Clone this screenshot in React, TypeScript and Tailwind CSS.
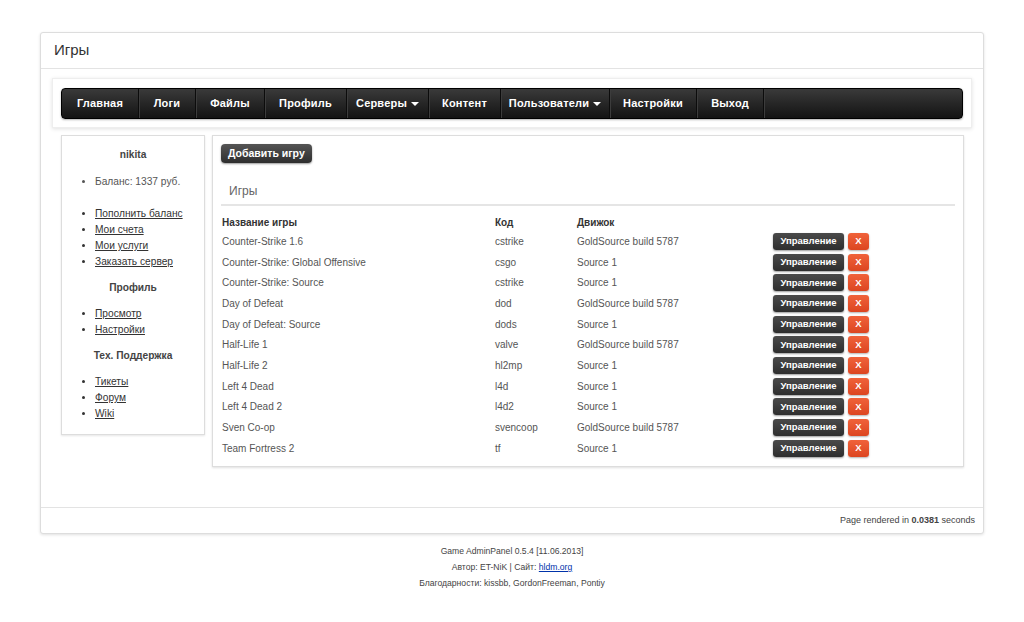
import React from "react";

const games = [
  ["Counter-Strike 1.6", "cstrike", "GoldSource build 5787"],
  ["Counter-Strike: Global Offensive", "csgo", "Source 1"],
  ["Counter-Strike: Source", "cstrike", "Source 1"],
  ["Day of Defeat", "dod", "GoldSource build 5787"],
  ["Day of Defeat: Source", "dods", "Source 1"],
  ["Half-Life 1", "valve", "GoldSource build 5787"],
  ["Half-Life 2", "hl2mp", "Source 1"],
  ["Left 4 Dead", "l4d", "Source 1"],
  ["Left 4 Dead 2", "l4d2", "Source 1"],
  ["Sven Co-op", "svencoop", "GoldSource build 5787"],
  ["Team Fortress 2", "tf", "Source 1"],
];

const nav: [string, number, boolean][] = [
  ["Главная", 77, false],
  ["Логи", 57, false],
  ["Файлы", 69, false],
  ["Профиль", 82, false],
  ["Серверы", 82, true],
  ["Контент", 72, false],
  ["Пользователи", 109, true],
  ["Настройки", 87, false],
  ["Выход", 67, false],
];

function Caret() {
  return <span className="ml-[4px] inline-block w-0 h-0 border-l-[4px] border-r-[4px] border-t-[4px] border-l-transparent border-r-transparent border-t-white align-middle" />;
}

export default function App() {
  return (
    <div className="w-[1024px] h-[622px] bg-white text-[#555] overflow-hidden" style={{ fontFamily: '"Liberation Sans", Arial, sans-serif' }}>
      <div className="pt-[32px] px-[40px]">
        <div className="w-[944px] h-[502px] border border-[#ddd] rounded-[3px] shadow-[0_1px_3px_rgba(0,0,0,0.12)] bg-white flex flex-col">
          <div className="h-[36px] border-b border-[#e3e3e3] pl-[13px] flex items-center">
            <span className="text-[15px] text-[#333]">Игры</span>
          </div>
          <div className="mt-[9px] mx-[11px] h-[50px] border border-[#eee] shadow-[0_1px_4px_rgba(0,0,0,0.12)] bg-white px-[8px] pt-[9px]">
            <div className="h-[31px] rounded-[4px] bg-gradient-to-b from-[#3a3a3a] to-[#141414] border border-[#000] flex shadow-[0_1px_2px_rgba(0,0,0,0.3)]">
              {nav.map(([label, w, caret]) => (
                <div key={label} style={{ width: w }} className="h-full flex items-center justify-center text-white text-[11px] font-bold tracking-[0.2px] border-r border-[#0c0c0c] shadow-[1px_0_0_#3c3c3c]">
                  {label}
                  {caret && <Caret />}
                </div>
              ))}
            </div>
          </div>
          <div className="flex mt-[7px] ml-[20px] gap-[7px] items-start">
            <div className="w-[144px] h-[300px] border border-[#ddd] shadow-[0_1px_2px_rgba(0,0,0,0.1)] bg-white text-[10.2px] pt-[11px]">
              <div className="text-center font-bold text-[#444] leading-[16px]">nikita</div>
              <ul className="list-disc pl-[33px] mt-[11px] leading-[16px] marker:text-[#555]">
                <li>Баланс: 1337 руб.</li>
              </ul>
              <ul className="list-disc pl-[33px] mt-[16px] leading-[16px] text-[#333]">
                <li><span className="underline">Пополнить баланс</span></li>
                <li><span className="underline">Мои счета</span></li>
                <li><span className="underline">Мои услуги</span></li>
                <li><span className="underline">Заказать сервер</span></li>
              </ul>
              <div className="text-center font-bold text-[#444] leading-[16px] mt-[10px]">Профиль</div>
              <ul className="list-disc pl-[33px] mt-[10px] leading-[16px] text-[#333]">
                <li><span className="underline">Просмотр</span></li>
                <li><span className="underline">Настройки</span></li>
              </ul>
              <div className="text-center font-bold text-[#444] leading-[16px] mt-[10px]">Тех. Поддержка</div>
              <ul className="list-disc pl-[33px] mt-[10px] leading-[16px] text-[#333]">
                <li><span className="underline">Тикеты</span></li>
                <li><span className="underline">Форум</span></li>
                <li><span className="underline">Wiki</span></li>
              </ul>
            </div>
            <div className="w-[752px] h-[332px] border border-[#ddd] shadow-[0_1px_2px_rgba(0,0,0,0.12)] bg-white pt-[8px] pl-[8px] pr-[8px]">
              <div className="flex w-fit h-[19px] px-[7px] items-center rounded-[4px] bg-gradient-to-b from-[#555] to-[#2e2e2e] text-white text-[10.5px] font-bold shadow-[0_1px_2px_rgba(0,0,0,0.4)]">
                Добавить игру
              </div>
              <div className="mt-[20px] pl-[8px] pb-[5px] leading-[16px] border-b-2 border-[#e5e5e5] text-[12px] text-[#666]">Игры</div>
              <div className="mt-[7px] text-[10px]">
                <div className="flex h-[18px] items-center font-bold text-[#333]">
                  <div className="w-[274px] pl-[1px]">Название игры</div>
                  <div className="w-[82px]">Код</div>
                  <div>Движок</div>
                </div>
                {games.map(([n, c, e]) => (
                  <div key={n} className="flex h-[20.7px] items-center">
                    <div className="w-[274px] pl-[1px]">{n}</div>
                    <div className="w-[82px]">{c}</div>
                    <div className="w-[196px]">{e}</div>
                    <div className="flex gap-[4px]">
                      <div className="w-[71px] h-[17px] rounded-[3px] bg-gradient-to-b from-[#4a4a4a] to-[#2e2e2e] text-white text-[9.5px] font-bold flex items-center justify-center shadow-[0_1px_2px_rgba(0,0,0,0.4)]">Управление</div>
                      <div className="w-[21px] h-[17px] rounded-[3px] bg-gradient-to-b from-[#f0623a] to-[#dc4520] text-white text-[9.5px] font-bold flex items-center justify-center shadow-[0_1px_2px_rgba(0,0,0,0.3)]">X</div>
                    </div>
                  </div>
                ))}
              </div>
            </div>
          </div>
          <div className="mt-auto h-[26px] border-t border-[#e3e3e3] flex items-center justify-end pr-[8px] text-[9px] text-[#444]">
            Page rendered in&nbsp;<b>0.0381</b>&nbsp;seconds
          </div>
        </div>
      </div>
      <div className="mt-[9px] text-center text-[8.6px] text-[#444] leading-[16px]">
        <div>Game AdminPanel 0.5.4 [11.06.2013]</div>
        <div>Автор: ET-NiK | Сайт: <span className="underline text-[#0033aa]">hldm.org</span></div>
        <div>Благодарности: kissbb, GordonFreeman, Pontiy</div>
      </div>
    </div>
  );
}
